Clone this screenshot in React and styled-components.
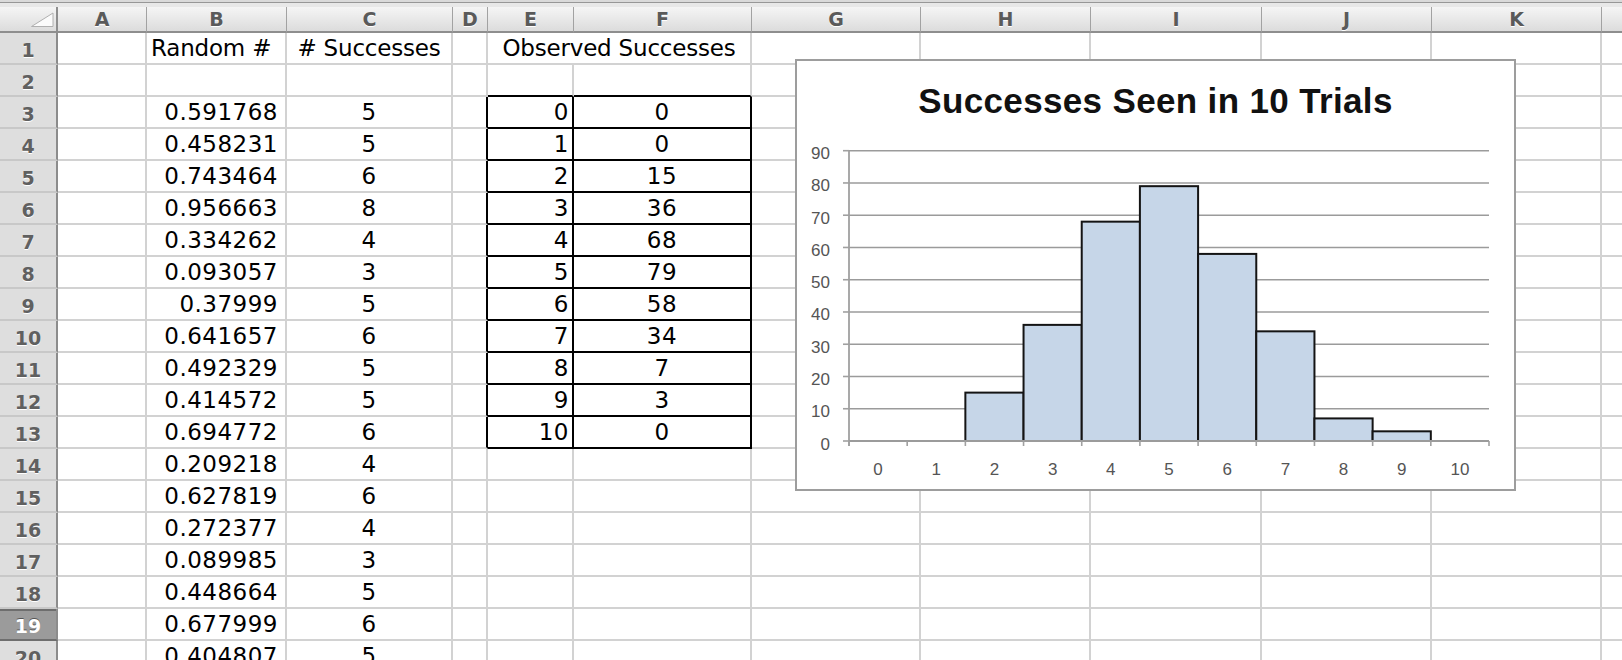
import React from "react";
import styled, { createGlobalStyle } from "styled-components";

const GlobalStyle = createGlobalStyle`
  html, body {
    margin: 0;
    padding: 0;
    background: #fff;
    overflow: hidden;
  }
  #root {
    width: 1622px;
    height: 660px;
    overflow: hidden;
  }
`;

// column widths, row header first
const WIDTHS = [58, 89, 140, 166, 35, 86, 178, 169, 170, 171, 170, 170, 170];
const LETTERS = ["A", "B", "C", "D", "E", "F", "G", "H", "I", "J", "K", "L"];

const RANDOMS = [
  "0.591768", "0.458231", "0.743464", "0.956663", "0.334262", "0.093057",
  "0.37999", "0.641657", "0.492329", "0.414572", "0.694772", "0.209218",
  "0.627819", "0.272377", "0.089985", "0.448664", "0.677999", "0.404807",
];
const SUCCESSES = [5, 5, 6, 8, 4, 3, 5, 6, 5, 5, 6, 4, 6, 4, 3, 5, 6, 5];
const OBSERVED = [0, 0, 15, 36, 68, 79, 58, 34, 7, 3, 0];

const SELECTED_ROW = 19;
const ROW_COUNT = 20;

const Sheet = styled.div`
  position: relative;
  width: 1622px;
  height: 660px;
  overflow: hidden;
  background: #fff;
`;

const TopStrip = styled.div`
  height: 7px;
  background: linear-gradient(
    to bottom,
    #dadada 0px,
    #dadada 2px,
    #979797 2px,
    #979797 3.5px,
    #e8e8e8 3.5px,
    #e8e8e8 7px
  );
`;

const Grid = styled.div`
  display: grid;
  grid-template-columns: ${WIDTHS.map((w) => `${w}px`).join(" ")};
  grid-auto-rows: 32px;
  grid-template-rows: 26px;
`;

const ColHead = styled.div`
  box-sizing: border-box;
  height: 26px;
  background: linear-gradient(#f5f5f5, #dcdcdc);
  border-right: 1px solid #a2a2a2;
  border-bottom: 2px solid #8e8e8e;
  display: flex;
  align-items: center;
  justify-content: center;
  font-family: "DejaVu Sans", Verdana, sans-serif;
  font-weight: bold;
  font-size: 19px;
  color: #5a5a5a;
  text-shadow: 0 1px 0 #fff;
`;

const Corner = styled(ColHead)`
  border-right: 2px solid #8e8e8e;
  position: relative;
  svg {
    position: absolute;
    left: 0;
    top: 0;
  }
`;

const RowHead = styled.div`
  box-sizing: border-box;
  height: 32px;
  padding-top: 3px;
  background: ${(p) => (p.$selected ? "#9b9b9b" : "#dedede")};
  border-right: 2px solid #8c8c8c;
  border-bottom: 2px solid ${(p) => (p.$selected ? "#6e6e6e" : "#c8c8c8")};
  box-shadow: ${(p) => (p.$selected ? "inset 0 2px 0 #6e6e6e" : "none")};
  display: flex;
  align-items: center;
  justify-content: center;
  font-family: "DejaVu Sans", Verdana, sans-serif;
  font-weight: bold;
  font-size: 19px;
  color: ${(p) => (p.$selected ? "#ffffff" : "#606060")};
  text-shadow: ${(p) =>
    p.$selected ? "0 -1px 0 #555" : "0 1px 0 #fff"};
`;

const Cell = styled.div`
  box-sizing: border-box;
  height: 32px;
  grid-column: span ${(p) => p.$span || 1};
  border-right: 2px solid ${(p) => (p.$edgeR ? "#000" : "#d2d2d2")};
  border-bottom: 2px solid ${(p) => (p.$edgeB ? "#000" : "#d2d2d2")};
  padding: 0 ${(p) => p.$pr ?? 4}px 0 ${(p) => p.$pl ?? 4}px;
  font-family: "DejaVu Sans", Verdana, sans-serif;
  font-size: 23px;
  line-height: 30px;
  letter-spacing: ${(p) => (p.$num ? "0.5px" : "-0.2px")};
  color: #000;
  text-align: ${(p) => p.$align || "left"};
  white-space: nowrap;
  overflow: hidden;
`;

const ChartFrame = styled.div`
  position: absolute;
  left: 795px;
  top: 59px;
  width: 721px;
  height: 432px;
  box-sizing: border-box;
  border: 2px solid #9d9d9d;
  background: #fff;
  display: flex;
  flex-direction: column;
`;

const ChartTitle = styled.div`
  margin-top: 20px;
  height: 40px;
  line-height: 40px;
  text-align: center;
  font-family: "Liberation Sans", Arial, sans-serif;
  font-weight: bold;
  font-size: 35px;
  letter-spacing: 0.35px;
  color: #111;
`;

const Plot = styled.svg`
  display: block;
  font-family: "Liberation Sans", Arial, sans-serif;
  font-size: 17px;
`;

function CornerTriangle() {
  return (
    <svg width="56" height="24" viewBox="0 0 56 24">
      <polygon
        points="31.5,19.5 53,19.5 53,6"
        fill="#fbfbfb"
        stroke="#b0b0b0"
        strokeWidth="1"
      />
    </svg>
  );
}

// plot geometry inside the svg
const X0 = 52;
const X1 = 692;
const Y0 = 320;
const UNIT = (320 - 29.7) / 90;
const CAT = (X1 - X0) / 11;

function Histogram() {
  const grid = [10, 20, 30, 40, 50, 60, 70, 80, 90];
  const yOf = (v) => Y0 - v * UNIT;
  return (
    <Plot width="717" height="368" viewBox="0 0 717 368">
      {grid.map((v) => (
        <line
          key={v}
          x1={X0}
          x2={X1}
          y1={yOf(v)}
          y2={yOf(v)}
          stroke="#9b9b9b"
          strokeWidth="1.6"
        />
      ))}
      {OBSERVED.map((v, i) =>
        v > 0 ? (
          <rect
            key={i}
            x={X0 + i * CAT}
            y={yOf(v)}
            width={CAT}
            height={v * UNIT}
            fill="#c6d6e8"
            stroke="#141414"
            strokeWidth="2"
          />
        ) : null
      )}
      <line x1={X0} x2={X0} y1={yOf(90)} y2={Y0 + 5} stroke="#a0a0a0" strokeWidth="1.8" />
      <line x1={X0} x2={X1} y1={Y0} y2={Y0} stroke="#9b9b9b" strokeWidth="1.8" />
      {[0, ...grid].map((v) => (
        <line key={`yt${v}`} x1={X0 - 6} x2={X0} y1={yOf(v)} y2={yOf(v)} stroke="#a0a0a0" strokeWidth="1.6" />
      ))}
      {Array.from({ length: 12 }, (_, i) => (
        <line
          key={`xt${i}`}
          x1={X0 + i * CAT}
          x2={X0 + i * CAT}
          y1={Y0}
          y2={Y0 + 5}
          stroke="#a0a0a0"
          strokeWidth="1.6"
        />
      ))}
      {[0, ...grid].map((v) => (
        <text key={`yl${v}`} x="33" y={yOf(v) + 8.5} textAnchor="end" fill="#555">
          {v}
        </text>
      ))}
      {OBSERVED.map((_, i) => (
        <text
          key={`xl${i}`}
          x={X0 + i * CAT + CAT / 2}
          y="354"
          textAnchor="middle"
          fill="#555"
        >
          {i}
        </text>
      ))}
    </Plot>
  );
}

function cellsForRow(r) {
  const cells = [];
  for (let c = 0; c < LETTERS.length; c++) {
    const col = LETTERS[c];
    const key = `${col}${r}`;
    const inBox = r >= 3 && r <= 13;

    if (r === 1 && col === "E") {
      cells.push(
        <Cell key={key} $span={2} $align="center">
          Observed Successes
        </Cell>
      );
      c++; // F merged
      continue;
    }

    const props = {};
    let content = null;

    if (r === 1 && col === "B") content = "Random #";
    if (r === 1 && col === "C") {
      content = "# Successes";
      props.$align = "center";
    }
    if (r >= 3 && col === "B") {
      content = RANDOMS[r - 3];
      props.$align = "right";
      props.$pr = 7;
      props.$num = true;
    }
    if (r >= 3 && col === "C") {
      content = SUCCESSES[r - 3];
      props.$align = "center";
      props.$num = true;
    }
    if (col === "D" && inBox) props.$edgeR = true;
    if (r === 2 && (col === "E" || col === "F")) props.$edgeB = true;
    if (inBox && col === "E") {
      content = r - 3;
      props.$align = "right";
      props.$pr = 3;
      props.$num = true;
      props.$edgeR = true;
      props.$edgeB = true;
    }
    if (inBox && col === "F") {
      content = OBSERVED[r - 3];
      props.$align = "center";
      props.$num = true;
      props.$edgeR = true;
      props.$edgeB = true;
    }

    cells.push(
      <Cell key={key} {...props}>
        {content}
      </Cell>
    );
  }
  return cells;
}

export default function App() {
  const rows = Array.from({ length: ROW_COUNT }, (_, i) => i + 1);
  return (
    <>
      <GlobalStyle />
      <Sheet>
        <TopStrip />
        <Grid>
          <Corner>
            <CornerTriangle />
          </Corner>
          {LETTERS.map((l) => (
            <ColHead key={l}>{l === "L" ? "" : l}</ColHead>
          ))}
          {rows.map((r) => (
            <React.Fragment key={r}>
              <RowHead $selected={r === SELECTED_ROW}>{r}</RowHead>
              {cellsForRow(r)}
            </React.Fragment>
          ))}
        </Grid>
        <ChartFrame>
          <ChartTitle>Successes Seen in 10 Trials</ChartTitle>
          <Histogram />
        </ChartFrame>
      </Sheet>
    </>
  );
}
